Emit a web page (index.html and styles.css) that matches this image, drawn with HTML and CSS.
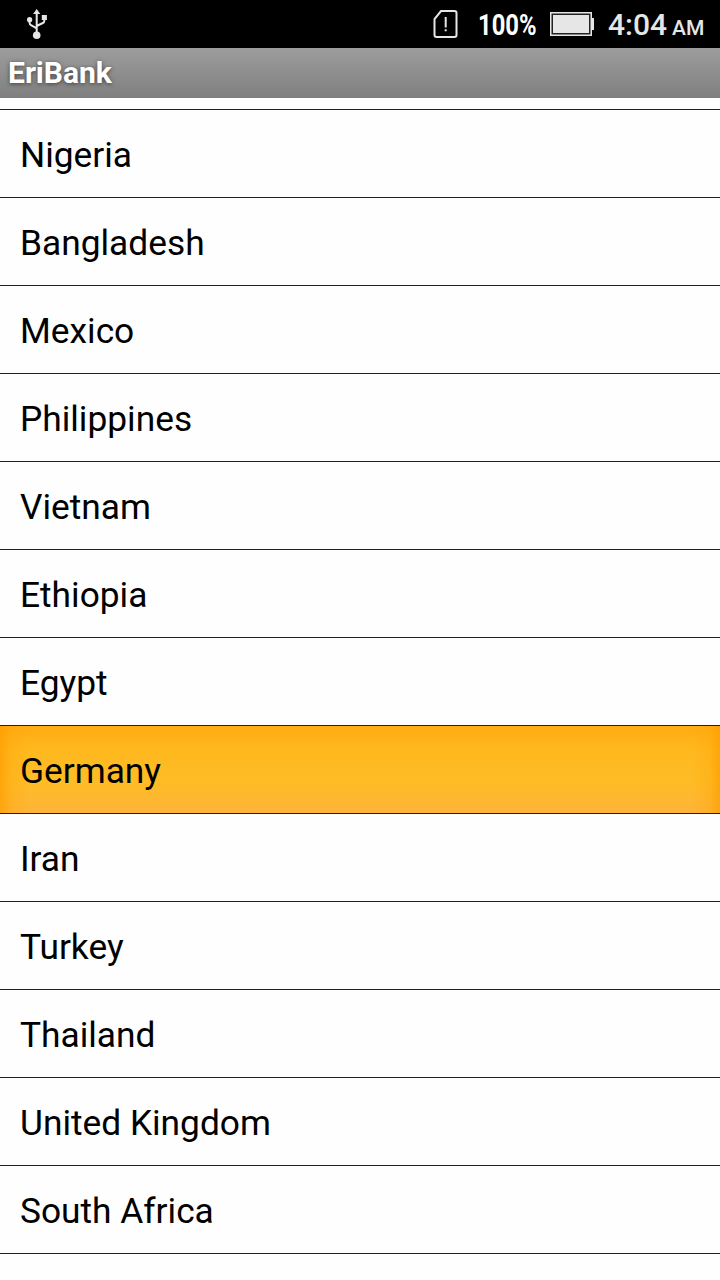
FILE: index.html
```html
<!DOCTYPE html>
<html lang="en">
<head>
<meta charset="utf-8">
<title>EriBank</title>
<link rel="stylesheet" href="styles.css">
</head>
<body>
<div class="screen">
  <header class="status">
    <svg class="usb" width="22" height="32" viewBox="0 0 22 32">
      <path class="usb-line" d="M9.7 27V4M9.7 20.3L4 17.2Q2.6 16.4 2.6 14.7V12M9.7 18L15.8 15Q17.4 14.2 17.4 12.5V9"/>
      <path class="usb-fill" d="M9.7 1L13.3 6H6.1ZM14.8 7H19.9V12H14.8Z"/>
      <circle class="usb-fill" cx="2.6" cy="11.7" r="2.6"/>
      <circle class="usb-fill" cx="9.7" cy="27.3" r="3.8"/>
    </svg>
    <svg class="sim" width="26" height="30" viewBox="0 0 26 30">
      <path class="sim-body" d="M8 2H21.5Q23.5 2 23.5 4V26Q23.5 28 21.5 28H3.5Q1.5 28 1.5 26V10Z"/>
      <path class="sim-mark" d="M12.7 8V18.4M12.7 20.2V22.2"/>
    </svg>
    <span class="percent"><span class="percent-text">100%</span></span>
    <svg class="battery" width="44" height="24" viewBox="0 0 44 24">
      <rect class="battery-case" x="0.75" y="0.75" width="40.5" height="22.5"/>
      <rect class="battery-level" x="3" y="3" width="36" height="18"/>
      <rect class="battery-tip" x="41" y="6" width="3" height="12"/>
    </svg>
    <span class="clock">4:04</span><span class="meridiem">AM</span>
  </header>
  <h1 class="title">EriBank</h1>
  <ul class="list">
    <li class="row partial"></li>
    <li class="row">Nigeria</li>
    <li class="row">Bangladesh</li>
    <li class="row">Mexico</li>
    <li class="row">Philippines</li>
    <li class="row">Vietnam</li>
    <li class="row">Ethiopia</li>
    <li class="row">Egypt</li>
    <li class="row pressed">Germany</li>
    <li class="row">Iran</li>
    <li class="row">Turkey</li>
    <li class="row">Thailand</li>
    <li class="row">United Kingdom</li>
    <li class="row">South Africa</li>
  </ul>
</div>
</body>
</html>
```
FILE: styles.css
```css
* { box-sizing: border-box; }
body { margin: 0; background: #fff; font-family: Roboto, "Noto Sans", sans-serif; }
.screen { width: 720px; height: 1280px; overflow: hidden; background: #fefefe; }

.status {
  display: flex;
  align-items: center;
  height: 48px;
  padding-left: 27px;
  background: #000;
  color: #e6e6e6;
}
.usb { flex: none; margin-right: auto; }
.usb-line { fill: none; stroke: #e6e6e6; stroke-width: 2; }
.usb-fill { fill: #e6e6e6; }
.sim { flex: none; margin-right: 19px; }
.sim-body { fill: none; stroke: #e6e6e6; stroke-width: 2; }
.sim-mark { fill: none; stroke: #e6e6e6; stroke-width: 2; }
.percent { flex: none; width: 60px; margin-right: 12px; color: #fff; font-size: 29px; font-weight: 700; line-height: 48px; padding-top: 2px; white-space: nowrap; }
.percent-text { display: inline-block; transform: scaleX(.82); transform-origin: 0 50%; }
.battery { flex: none; margin-right: 14px; }
.battery-case { fill: #222; stroke: #e6e6e6; stroke-width: 1.5; }
.battery-level { fill: #e6e6e6; }
.battery-tip { fill: #e6e6e6; }
.clock { flex: none; width: 64px; padding-top: 2px; font-size: 30px; font-weight: 500; line-height: 48px; }
.meridiem { flex: none; width: 48px; padding-top: 7px; font-size: 21px; font-weight: 500; line-height: 48px; }

.title {
  height: 50px;
  margin: 0;
  padding-left: 8px;
  background: linear-gradient(#9d9d9d, #7f7f7f);
  color: #fff;
  font-size: 30px;
  font-weight: 700;
  line-height: 50px;
  text-shadow: 0 1px 4px rgba(0, 0, 0, .55);
}

.list { margin: 0; padding: 0; list-style: none; }
.row {
  height: 88px;
  padding-left: 20px;
  border-bottom: 1px solid #202024;
  color: #000;
  font-size: 35.3px;
  line-height: 91px;
}
.partial { height: 12px; }
.pressed {
  background:
    linear-gradient(90deg, rgba(255, 158, 0, .75), rgba(255, 165, 8, .35) 10px, rgba(255, 170, 10, 0) 28px),
    linear-gradient(270deg, rgba(255, 158, 0, .75), rgba(255, 165, 8, .35) 10px, rgba(255, 170, 10, 0) 28px),
    linear-gradient(#ffab12, #ffb91e 28%, #febc26 65%, #feb634 90%, #feb23a);
}
```
